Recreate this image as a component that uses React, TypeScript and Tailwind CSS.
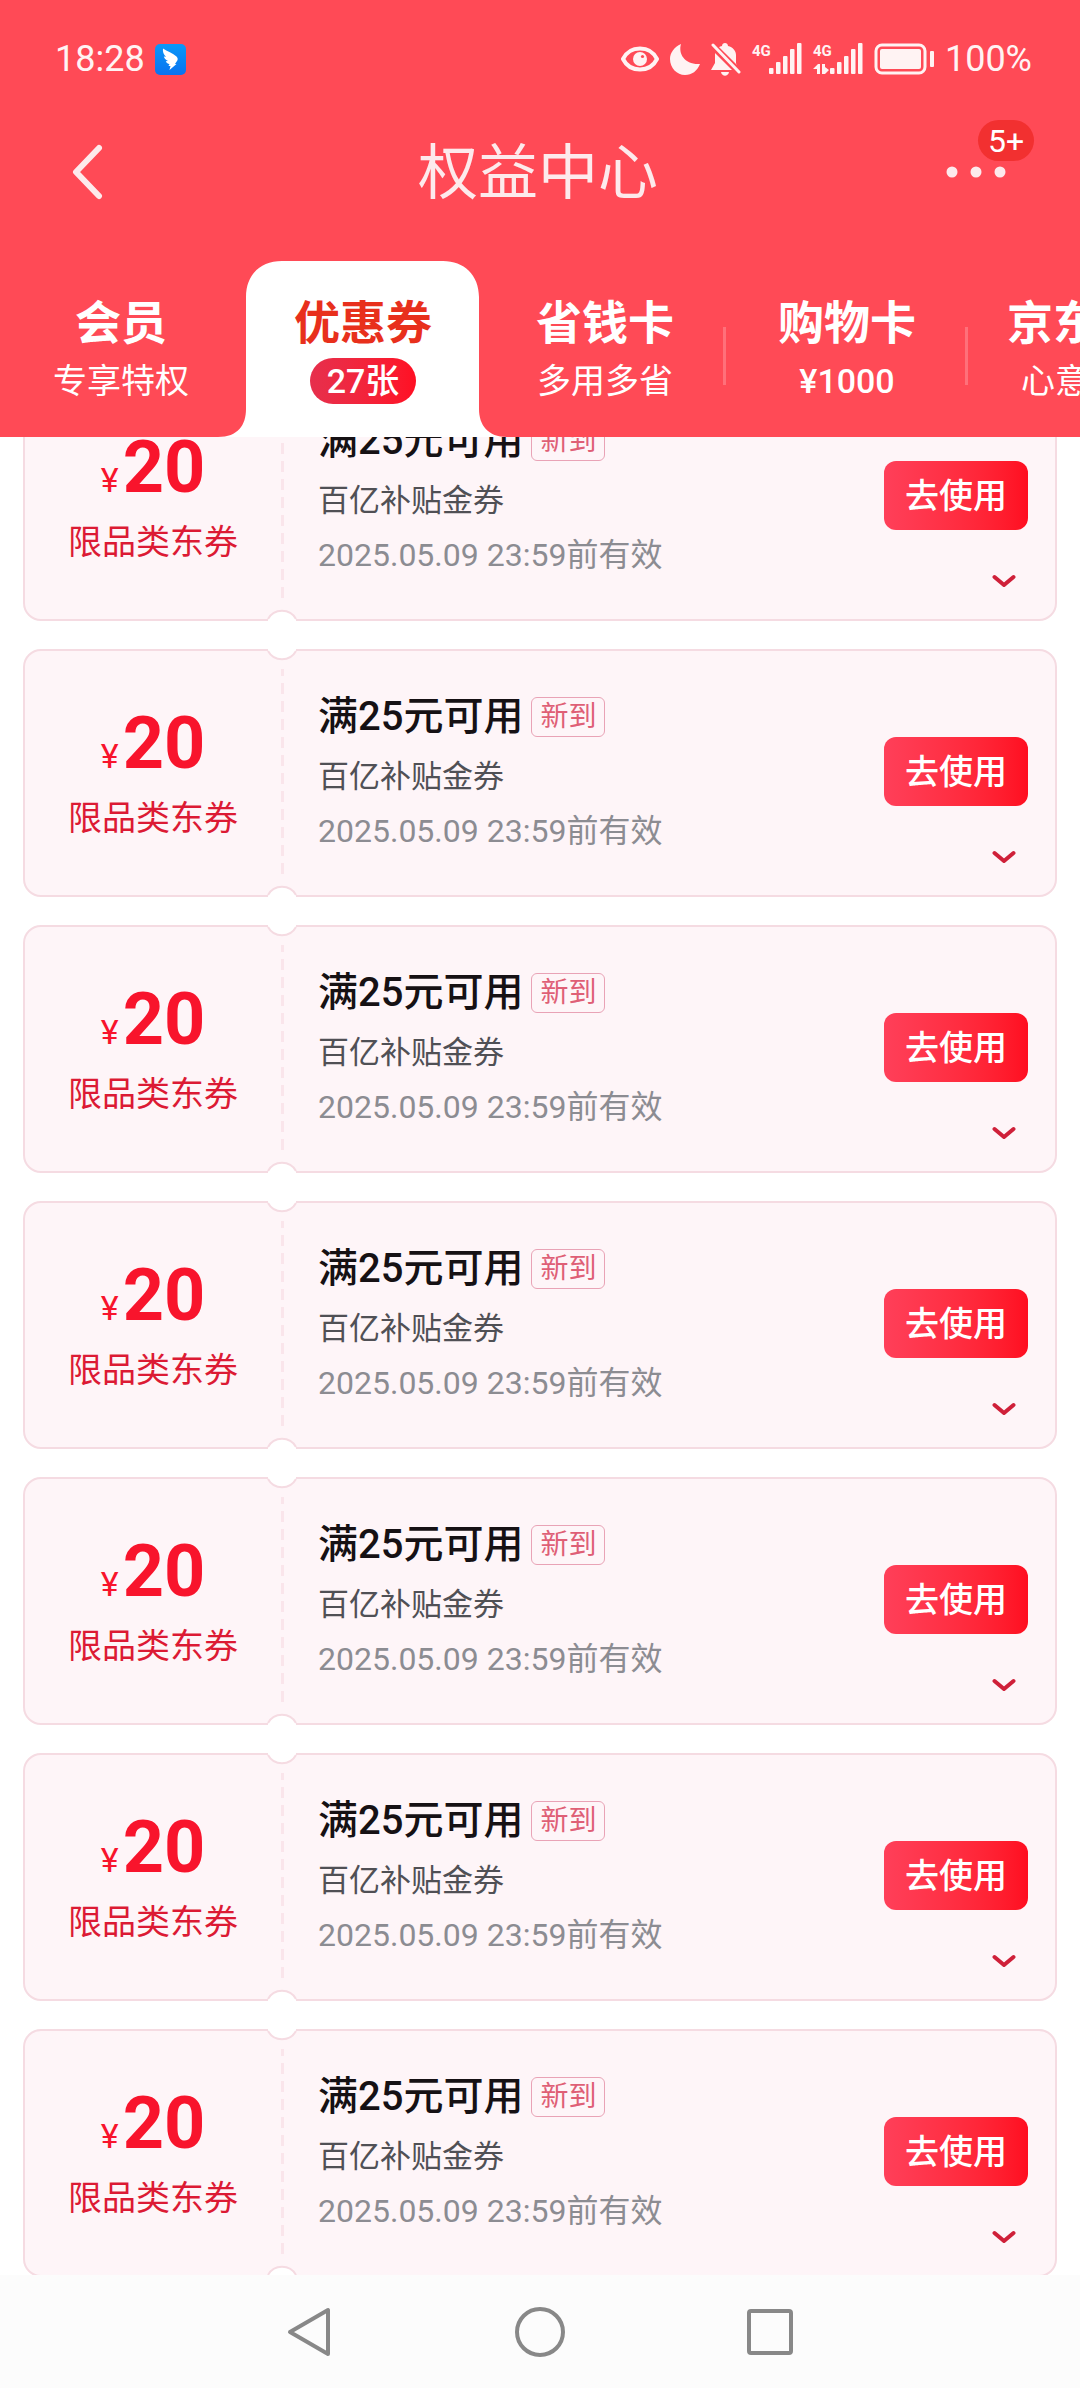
import { useState } from 'react';
import type { ReactNode } from 'react';

type Tab = { id: string; title: string; sub: string };

const tabs: Tab[] = [
  { id: 'member', title: '会员', sub: '专享特权' },
  { id: 'coupon', title: '优惠券', sub: '27张' },
  { id: 'saving', title: '省钱卡', sub: '多用多省' },
  { id: 'shopping', title: '购物卡', sub: '¥1000' },
  { id: 'ecard', title: '京东E卡', sub: '心意礼品' },
];

const coupons = Array.from({ length: 7 }, (_, i) => ({
  id: i,
  amount: 20,
  scope: '限品类东券',
  title: '满25元可用',
  tag: '新到',
  source: '百亿补贴金券',
  expires: '2025.05.09 23:59前有效',
}));

function SignalBars({ data }: { data?: boolean }) {
  return (
    <div className="flex w-[50px] h-8">
      <div className="flex flex-col w-[17px]">
        <span className="text-[15px] leading-[16px] font-bold">4G</span>
        {data && (
          <svg viewBox="0 0 17 10" className="w-[17px] h-[10px] mt-[5px]" fill="currentColor">
            <path d="M0 5l5-5h2v10H4V5zM9 0h3v3l4 3-4 4H9z" />
          </svg>
        )}
      </div>
      <svg viewBox="0 0 33 32" className="w-[33px] h-8" fill="currentColor">
        <rect x="0" y="25" width="4.5" height="6" rx="1" />
        <rect x="7" y="19" width="4.5" height="12" rx="1" />
        <rect x="14" y="13" width="4.5" height="18" rx="1" />
        <rect x="21" y="6" width="4.5" height="25" rx="1" />
        <rect x="28" y="0" width="4.5" height="31" rx="1" />
      </svg>
    </div>
  );
}

function StatusBar() {
  return (
    <div className="flex items-center justify-between h-[118px] pl-[55px] pr-12 text-[#fff3f3]">
      <div className="flex items-center gap-[10px]">
        <span className="text-[36px] leading-[40px]">18:28</span>
        <svg viewBox="0 0 31 31" className="w-[31px] h-[31px]">
          <defs>
            <linearGradient id="app" x1="0" y1="0" x2="0" y2="1">
              <stop offset="0" stopColor="#0a98f8" />
              <stop offset="1" stopColor="#0a72f0" />
            </linearGradient>
          </defs>
          <rect width="31" height="31" rx="5" fill="url(#app)" />
          <path d="M8 4.500C12 7 18 9.500 21.500 12.500C23 14 23 15.500 22 17L20 20H21.500L14.500 26L15.500 22H13.500L14.500 20C12.500 19.700 11.300 18.600 10.800 17.200L13 17C10.500 15.800 9.300 14.300 8.800 12.500L11 12.700C8.500 10.500 7.500 7.500 8 4.500z" fill="#fff" />
        </svg>
      </div>
      <div className="flex items-center gap-[11px]">
        <svg viewBox="0 0 38 26" className="w-[38px] h-[26px]" fill="none" stroke="currentColor">
          <path d="M2 13C9 -1 29 -1 36 13 29 27 9 27 2 13z" strokeWidth="4" strokeLinejoin="round" />
          <circle cx="19" cy="13" r="7" fill="currentColor" stroke="none" />
          <circle cx="21.500" cy="10.500" r="1.600" fill="#ff4a56" stroke="none" />
        </svg>
        <svg viewBox="0 0 30 31" className="w-[30px] h-[31px]" fill="currentColor">
          <path d="M11 0C8 10 15 21 30 20 27 27 22 31 15 31 7 31 0 24 0 15 0 9 4 3 11 0z" />
        </svg>
        <svg viewBox="0 0 30 33" className="w-[30px] h-[33px]">
          <path d="M11 3c0-4 6-4 6 0 5 1 8 5 8 9v8l2 7H0l4-7v-8c0-4 2-8 7-9z" fill="currentColor" />
          <path d="M10 29h8c-1 5-7 5-8 0z" fill="currentColor" />
          <path d="M0 1l29 29" stroke="#ff4a56" strokeWidth="7" />
          <path d="M2 2l26 27" stroke="currentColor" strokeWidth="3" strokeLinecap="round" />
        </svg>
        <SignalBars />
        <SignalBars data />
        <svg viewBox="0 0 60 32" className="w-[60px] h-8">
          <rect x="2" y="2" width="49" height="28" rx="6" fill="none" stroke="currentColor" strokeWidth="3" />
          <rect x="6" y="6" width="41" height="20" rx="2" fill="currentColor" />
          <rect x="56" y="8" width="4" height="16" rx="1" fill="currentColor" />
        </svg>
        <span className="text-[36px] leading-[40px]">100%</span>
      </div>
    </div>
  );
}

function TitleBar() {
  return (
    <div className="grid grid-cols-[1fr_auto_1fr] items-center h-[108px] pl-[70px] pr-[74px] text-[#fdeaec]">
      <button aria-label="返回" className="justify-self-start">
        <svg viewBox="0 0 36 56" className="w-9 h-14" fill="none" stroke="currentColor" strokeWidth="6" strokeLinecap="round" strokeLinejoin="round">
          <path d="M29 4L6 28l23 24" />
        </svg>
      </button>
      <h1 className="pt-1 text-[60px] leading-[72px] font-normal">权益中心</h1>
      <button aria-label="更多" className="relative justify-self-end">
        <svg viewBox="0 0 60 12" className="w-[60px] h-3" fill="currentColor">
          <circle cx="6" cy="6" r="5.500" />
          <circle cx="30" cy="6" r="5.500" />
          <circle cx="54" cy="6" r="5.500" />
        </svg>
        <span className="absolute left-8 -top-[46px] flex items-center justify-center w-14 h-[41px] rounded-full bg-[#f23030] text-white text-[32px] leading-[40px]">
          5+
        </span>
      </button>
    </div>
  );
}

function TabItem({ tab, active, divider, onSelect }: { tab: Tab; active: boolean; divider: boolean; onSelect: () => void }) {
  return (
    <button
      onClick={onSelect}
      className="relative flex-none flex flex-col items-center w-[242px] h-full pt-[34px]"
    >
      {active && (
        <svg viewBox="0 0 290 176" className="absolute bottom-0 -left-6 w-[290px] h-[176px]" fill="#fff">
          <path d="M0 176C20 176 28 164 28 148V36C28 14 42 0 64 0H225C246 0 261 14 261 36V148C261 164 270 176 289 176z" />
        </svg>
      )}
      <span className={`relative text-[46px] leading-[56px] font-bold whitespace-nowrap ${active ? 'text-[#e8301c]' : 'text-white'}`}>
        {tab.title}
      </span>
      {active ? (
        <span className="relative mt-[7px] flex items-center h-[46px] px-[17px] rounded-full bg-linear-to-r from-[#e62f4c] to-[#ff0f23] text-white text-[34px] leading-none font-medium">
          {tab.sub}
        </span>
      ) : (
        <span className={`relative mt-[7px] text-[34px] leading-[46px] whitespace-nowrap text-white ${tab.sub.startsWith('¥') ? 'font-medium' : ''}`}>
          {tab.sub}
        </span>
      )}
      {divider && <span className="absolute right-0 top-[66px] w-[3px] h-[58px] bg-[#ff707a]" />}
    </button>
  );
}

function Notch({ flip }: { flip?: boolean }) {
  return (
    <svg
      viewBox="0 0 32 12"
      className={`absolute left-[241px] w-8 h-3 ${flip ? '-bottom-[2px] rotate-180' : '-top-[2px]'}`}
    >
      <path d="M2 0V2C8 13 24 13 30 2V0z" fill="#fff" />
      <path d="M2 2C8 13 24 13 30 2" fill="none" stroke="#f5dbe2" strokeWidth="2" />
    </svg>
  );
}

function CouponCard({ c }: { c: (typeof coupons)[number] }) {
  const [open, setOpen] = useState(false);
  return (
    <li className="relative flex h-[248px] rounded-[18px] border-2 border-[#f5dbe2] bg-[#fef5f8]">
      <Notch />
      <Notch flip />
      <div className="flex-none flex flex-col items-center w-64 pt-[59px] text-[#f8142c]">
        <div className="flex items-baseline gap-1 leading-[68px]">
          <span className="text-[34px]">¥</span>
          <span className="text-[72px] font-bold">{c.amount}</span>
        </div>
        <div className="mt-1 text-[34px] leading-[48px] text-[#dc1a34]">{c.scope}</div>
      </div>
      <svg className="flex-none w-[3px] h-[208px] mt-[18px]" fill="none">
        <line x1="1.500" y1="0" x2="1.500" y2="208" stroke="#fae5eb" strokeWidth="3" strokeDasharray="11 7" strokeDashoffset="4" />
      </svg>
      <div className="flex-1 pl-[34px] pt-10">
        <div className="flex items-center gap-2">
          <h2 className="text-[40px] leading-[52px] font-medium text-[#161114]">{c.title}</h2>
          <span className="flex items-center h-10 px-2 rounded-[6px] border border-[#e9a3b6] text-[28px] leading-none text-[#df5f76]">
            {c.tag}
          </span>
        </div>
        <p className="mt-[10px] text-[31px] leading-[48px] text-[#505055]">{c.source}</p>
        <p className="mt-[6px] text-[32px] leading-[48px] text-[#8c8c92]">{c.expires}</p>
      </div>
      <div className="flex flex-col items-end pr-[27px] pt-[86px]">
        <button className="w-36 h-[69px] rounded-[12px] bg-linear-to-r from-[#ff3f59] to-[#ff0d20] text-white text-[34px] leading-none font-medium">
          去使用
        </button>
        <button aria-label="展开" onClick={() => setOpen(!open)} className="mt-11 mr-3">
          <svg viewBox="0 0 24 14" className={`w-6 h-[14px] ${open ? 'rotate-180' : ''}`} fill="none" stroke="#cf2039" strokeWidth="4" strokeLinecap="round" strokeLinejoin="round">
            <path d="M2.500 3l9.500 8 9.500-8" />
          </svg>
        </button>
      </div>
    </li>
  );
}

function NavBar({ children }: { children: ReactNode }) {
  return <nav className="flex-none flex items-center justify-center gap-[180px] h-[113px] bg-[#fcfcfc]">{children}</nav>;
}

export default function App() {
  const [active, setActive] = useState('coupon');

  return (
    <div className="flex flex-col h-screen overflow-hidden bg-white font-['Roboto','Noto_Sans_CJK_SC',sans-serif]">
      <header className="relative z-10 flex-none bg-[#ff4a56]">
        <StatusBar />
        <TitleBar />
        <div className="flex h-[211px] pt-[35px] overflow-hidden">
          {tabs.map((t, i) => (
            <TabItem
              key={t.id}
              tab={t}
              active={t.id === active}
              divider={t.id !== active && i < tabs.length - 1 && tabs[i + 1].id !== active && i > 0}
              onSelect={() => setActive(t.id)}
            />
          ))}
        </div>
      </header>

      <main className="flex-1 min-h-0 overflow-hidden">
        <ul className="flex flex-col gap-7 px-[23px] -mt-16">
          {coupons.map(c => <CouponCard key={c.id} c={c} />)}
        </ul>
      </main>

      <NavBar>
        <button aria-label="返回">
          <svg viewBox="0 0 50 50" className="w-[50px] h-[50px]" fill="none" stroke="#888" strokeWidth="4" strokeLinejoin="round">
            <path d="M43 3v44L5 25z" />
          </svg>
        </button>
        <button aria-label="主页">
          <svg viewBox="0 0 50 50" className="w-[50px] h-[50px]" fill="none" stroke="#888" strokeWidth="4">
            <circle cx="25" cy="25" r="23" />
          </svg>
        </button>
        <button aria-label="最近任务">
          <svg viewBox="0 0 50 50" className="w-[50px] h-[50px]" fill="none" stroke="#888" strokeWidth="4">
            <rect x="4" y="4" width="42" height="42" rx="2" />
          </svg>
        </button>
      </NavBar>
    </div>
  );
}
